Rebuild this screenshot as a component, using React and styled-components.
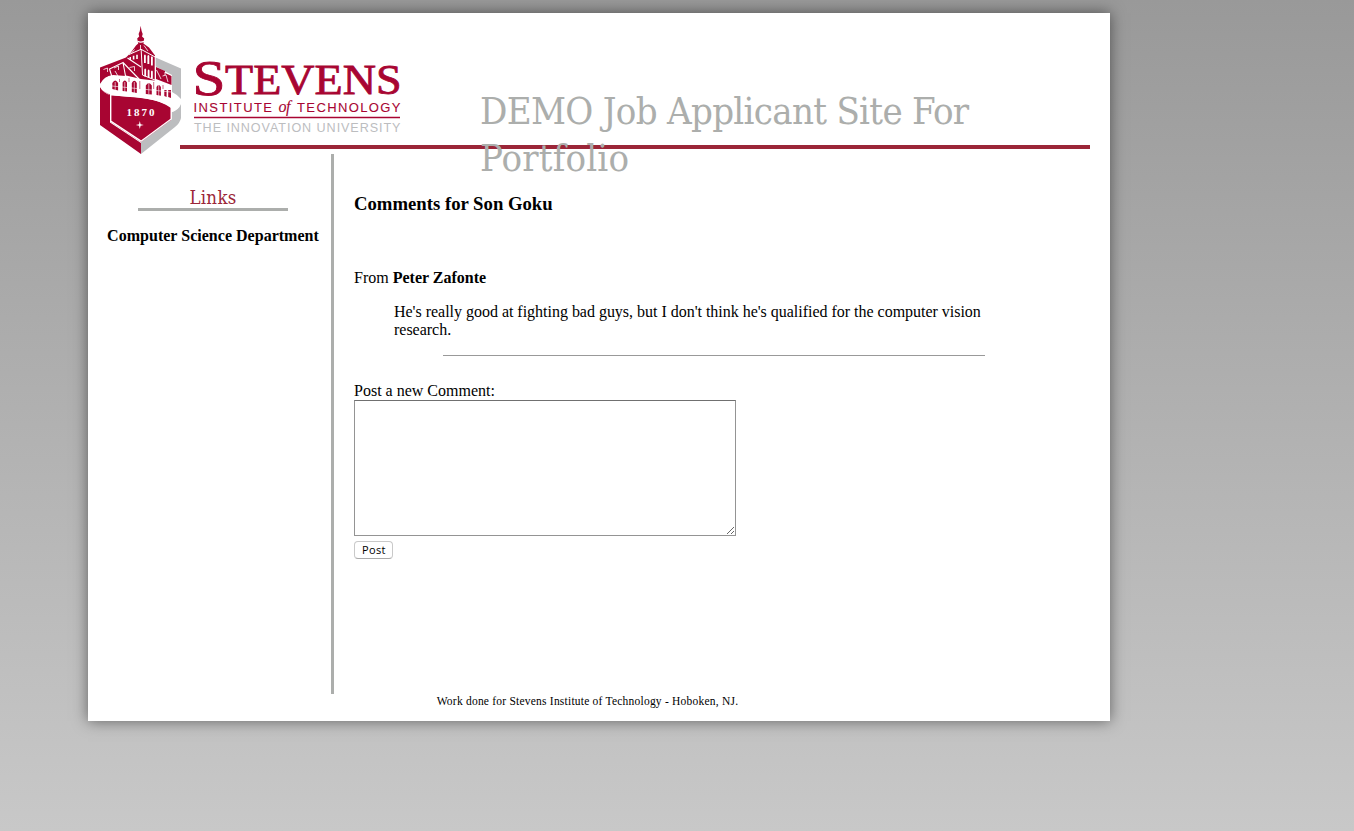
import React from "react";
import styled, { createGlobalStyle } from "styled-components";

const GlobalStyle = createGlobalStyle`
  html { height: 100%; background: #c6c6c6; }
  body {
    margin: 0;
    min-height: 831px;
    background: linear-gradient(#999, #c8c8c8);
    font-family: "Liberation Serif", "Times New Roman", serif;
    font-size: 16px;
    line-height: 18px;
    color: #000;
    overflow: hidden;
  }
  #root { display: flow-root; }
`;

const Page = styled.div`
  width: 1022px;
  height: 708px;
  margin: 13px 0 0 88px;
  background: #fff;
  box-shadow: 0 0 14px rgba(0, 0, 0, 0.5);
  display: flex;
  flex-direction: column;
`;

const Header = styled.header`
  position: relative;
  height: 141px;
  flex: none;
  display: flex;
  align-items: flex-start;
`;

const HeaderRule = styled.div`
  position: absolute;
  left: 92px;
  right: 20px;
  top: 132px;
  height: 4px;
  background: #9b2638;
`;

const Logo = styled.svg`
  position: relative;
  flex: none;
  width: 310px;
  height: 141px;
  margin-left: 7px;
`;

const Title = styled.h1`
  position: relative;
  margin: 75px 0 0 75px;
  width: 520px;
  font: 400 38px/47px "DejaVu Serif Condensed", "DejaVu Serif", serif;
  font-stretch: condensed;
  color: #acaeac;
  white-space: nowrap;
`;

const TitleLine = styled.span`
  display: block;
  letter-spacing: ${(p) => p.$spacing};
`;

const Columns = styled.div`
  display: flex;
  height: 540px;
  flex: none;
`;

const Sidebar = styled.aside`
  width: 243px;
  display: flex;
  flex-direction: column;
  align-items: center;
  border-right: 3px solid #acaeac;
`;

const LinksHeading = styled.h2`
  width: 150px;
  height: 23px;
  margin: 31px 0 16px 7px;
  border-bottom: 3px solid #acaeac;
  font: 400 18.5px/26px "DejaVu Serif Condensed", "DejaVu Serif", serif;
  font-stretch: condensed;
  letter-spacing: 0.3px;
  text-align: center;
  color: #9b2638;
`;

const SideLink = styled.a`
  margin-left: 7px;
  font-weight: bold;
  letter-spacing: 0.02px;
  white-space: nowrap;
`;

const Content = styled.main`
  padding: 39px 0 0 20px;
  width: 631px;
`;

const Heading = styled.h3`
  margin: 0;
  font-size: 18.72px;
  line-height: 22px;
`;

const From = styled.p`
  margin: 54px 0 16px;
`;

const Comment = styled.blockquote`
  margin: 0 0 0 40px;
  letter-spacing: -0.018px;
  white-space: nowrap;
`;

const Separator = styled.hr`
  width: 542px;
  height: 1px;
  margin: 16px 0 26px 89px;
  border: 0;
  background: #999;
`;

const Form = styled.form`
  display: flex;
  flex-direction: column;
  align-items: flex-start;
`;

const CommentBox = styled.textarea`
  box-sizing: border-box;
  width: 382px;
  height: 136px;
  margin: 0 0 5px;
  border: 1px solid #949494;
  border-top-color: #707070;
  border-radius: 0;
  background: #fff;
  outline: none;
`;

const PostButton = styled.button`
  box-sizing: border-box;
  width: 39px;
  height: 18px;
  padding: 0 0 1px 1px;
  border: 1px solid #c9c9c9;
  border-bottom-color: #aaa;
  border-radius: 4px;
  background: #fff;
  font: 11px/14px "Open Sans", sans-serif;
  letter-spacing: 0.35px;
  color: #000;
`;

const Footer = styled.footer`
  padding: 0 23px 0 0;
  text-align: center;
  font-size: 11.5px;
  line-height: 15px;
  letter-spacing: 0.22px;
`;

const red = "#a80532";
const gray = "#bcbdbf";

function StevensLogo() {
  return (
    <Logo viewBox="95 13 310 141" overflow="visible" role="img" aria-label="Stevens Institute of Technology">
      {/* shaded right-hand side of the shield */}
      <path fill={gray} d="M155 57.3 181 68.5V99Q178 95 172 92V75L155 66Z" />
      <path fill={gray} d="M171 112.5Q179 110 181 104V118Q180 123 175 127L141 154V142L171 120Z" />

      {/* left wing roof, tower and spire */}
      <path fill={red} d="M100 67.5 126 57.5 130.5 53 136 45.5 138.2 43.5 137.2 38.5 139.2 36.5 138.6 34 139.8 31 140.6 25.7 141.6 31 142.7 34 142 36.5 144.2 38.5 143.4 43.5 149 47.5 155 55.5V90L141 84V80L126 76 113 75Q104 77 103 83L100 84Z" />
      {/* right wing roof */}
      <path fill={red} d="M156 67 165 71V73L171.5 76V85L156 79Z" />
      {/* facade */}
      <path fill="#fff" d="M112 77 118 78 126 75.5 141 79 154 80.5 171.5 86V97L140 94 109 89Z" />
      <g fill="none" stroke="#fff">
        <path strokeWidth="1" d="M129 54.5 141 49.3 155.2 57M141.2 50 142.5 75 155 80M155.2 56V81" />
        <path strokeWidth="1.1" d="M112 77 109.5 69 123 62.5 125.5 76M123 62.5 139 79M127.5 58 141 67" />
        <path strokeWidth=".8" d="M134.5 49.5 131.5 53M140.5 45V49M144 45.5 148 51M103.5 69.5 107.5 68V72M114 68 118.5 66V70M115 71 118.5 77M129.5 67.5 134.5 66.5V71M156.5 70 161 79M162.5 76 166 75 168 82M165 72V75" />
      </g>
      <path stroke="#fff" strokeWidth="1.2" fill="none" d="M137.5 41.2Q140.8 43 144 41.2" />
      <path fill="#fff" d="M129.5 57h1.5v3h-1.5zM132.8 55.8h1.6v3.7h-1.6zM136.2 54.8h1.6v4.2h-1.6zM144 55.5q1-2 1.8 0V63H144zM147.4 56q1-2 1.9 0v8h-1.9zM151 57q1-1.5 1.8 0v8.5H151zM144.3 69.5q1-2 1.8 0v7h-1.8zM147.7 70.5q1-2 1.8 0v7h-1.8zM151 71.5q1-2 1.8 0v7H151z" />

      {/* front of the shield */}
      <path fill={red} d="M100 87Q103 93 111 95.5L128 96.5Q156 98 171 107V120L141 142 111 122V95L100 89ZM100 89 110 95V122.5L141 143V154L100 125Z" />
      {/* ribbon sweeping around the shield */}
      <path fill="#fff" d="M113 75Q106 77 106 82Q106 87 115 89.5L144 93.5Q176 94 181 101Q180 110 171 112V108C158 98 139 98 119 96Q103 94 100 86V84Q104 76 113 75Z" />
      {/* arched windows, reaching down to the ribbon */}
      <path fill={red} d="M112.3 89v-6q2.9-5 5.8 0v7.5zM122.6 91v-8.500q2.200-4 4.400 0v9zM131.800 92v-9q2.500-4.500 5 0v10zM145.800 94v-8.500q3-5 6 0v9zM156.500 95v-8q2.200-4 4.400 0v8.800zM164.300 96v-6h2.300V97zM168.200 97v-7h2.800v8z" />
      <path fill="none" stroke="#fff" strokeWidth=".6" d="M115.2 82V90M124.8 82V92M134.3 82V93M148.8 83V94M158.7 85V96M112 86 171 92" />
      <path fill="none" stroke={red} strokeWidth=".6" d="M119.5 79V82M129 78V82M139.8 81V89M153.7 82V89M163 85V89" />
      <path fill="none" stroke="#fff" strokeWidth="1.4" d="M110.7 94V121.2L141 141.2 171.2 119V107" />
      <path fill="#fff" d="M139.8 121 140.6 124.2 143.8 125 140.6 125.8 139.8 129 139 125.8 135.8 125 139 124.2Z" />
      <text x="126.500" y="115.5" fill="#fff" fontFamily="Liberation Serif" fontWeight="bold" fontSize="11" textLength="28">1870</text>

      {/* wordmark */}
      <g fill={red} stroke={red} strokeWidth=".8" fontFamily="Liberation Serif">
        <text x="192.5" y="95.2" fontSize="51" textLength="33" lengthAdjust="spacingAndGlyphs">S</text>
        <text x="225" y="94.2" fontSize="41.5" textLength="176.5" lengthAdjust="spacingAndGlyphs">TEVENS</text>
      </g>
      <g fill={red} stroke={red} strokeWidth=".1" fontFamily="Liberation Sans" fontSize="13">
        <text x="193.5" y="112" textLength="78.5">INSTITUTE</text>
        <text x="278.5" y="112" fontFamily="Liberation Serif" fontStyle="italic" fontSize="16" textLength="12">of</text>
        <text x="297" y="112" textLength="103.5">TECHNOLOGY</text>
      </g>
      <path fill={red} d="M194 116.7h206v1.5H194z" />
      <text x="194" y="132.2" fill={gray} fontFamily="Liberation Sans" fontSize="12.6" textLength="206.5">THE INNOVATION UNIVERSITY</text>
    </Logo>
  );
}

export default function App() {
  return (
    <>
      <GlobalStyle />
      <Page>
        <Header>
          <HeaderRule />
          <StevensLogo />
          <Title>
            <TitleLine $spacing="-0.7px">DEMO Job Applicant Site For</TitleLine>
            <TitleLine $spacing="0.15px">Portfolio</TitleLine>
          </Title>
        </Header>
        <Columns>
          <Sidebar>
            <LinksHeading>Links</LinksHeading>
            <SideLink>Computer Science Department</SideLink>
          </Sidebar>
          <Content>
            <Heading>Comments for Son Goku</Heading>
            <From>From <b>Peter Zafonte</b></From>
            <Comment>
              He's really good at fighting bad guys, but I don't think he's qualified for the computer vision
              <br />
              research.
            </Comment>
            <Separator />
            <Form onSubmit={(e) => e.preventDefault()}>
              <label htmlFor="comment">Post a new Comment:</label>
              <CommentBox id="comment" />
              <PostButton type="submit">Post</PostButton>
            </Form>
          </Content>
        </Columns>
        <Footer>Work done for Stevens Institute of Technology - Hoboken, NJ.</Footer>
      </Page>
    </>
  );
}
